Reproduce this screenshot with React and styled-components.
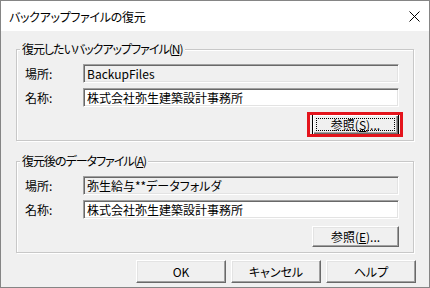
import React from 'react'
import styled, { createGlobalStyle, css } from 'styled-components'

const GlobalStyle = createGlobalStyle`
  body {
    margin: 0;
    padding: 0;
    background: #fff;
  }
`

const Window = styled.div`
  width: 430px;
  height: 288px;
  box-sizing: border-box;
  border: 1px solid #858585;
  background: #f0f0f0;
  font-family: "Noto Sans CJK JP", "Noto Sans", sans-serif;
  font-size: 12px;
  line-height: 16px;
  color: #000;
  font-feature-settings: "palt" 1;
  display: flex;
  flex-direction: column;
  overflow: hidden;
`

const TitleBar = styled.div`
  flex: none;
  height: 30px;
  background: #fff;
  display: flex;
  align-items: center;
  justify-content: space-between;
  padding: 0 9px 0 8px;
`

const Title = styled.div`
  font-size: 12px;
  padding-top: 1px;
  letter-spacing: -0.3px;
`

const Body = styled.div`
  flex: 1;
  padding: 18px 15px 0 15px;
`

const Group = styled.div`
  position: relative;
  border: 1px solid #c8c8c8;
  box-shadow: inset 1px 1px #fff, 1px 1px #fff;
  padding: 14px 14px 5px 8px;
  margin-bottom: ${p => p.$mb || 0}px;
`

const Legend = styled.div`
  position: absolute;
  top: -9px;
  left: 3px;
  padding: 0 2px;
  background: #f0f0f0;
  white-space: nowrap;
  letter-spacing: -1px;
`

const Rows = styled.div`
  display: flex;
  flex-direction: column;
  gap: 5px;
`

const Row = styled.div`
  display: grid;
  grid-template-columns: 58px 1fr;
  align-items: center;
`

const Label = styled.div`
  white-space: nowrap;
`

const Field = styled.div`
  box-sizing: border-box;
  height: 19px;
  padding: 0 0 0 3px;
  background: ${p => (p.$readonly ? '#f0f0f0' : '#fff')};
  border: 1px solid;
  border-color: #a0a0a0 #fff #fff #a0a0a0;
  box-shadow: inset 1px 1px #696969, inset -1px -1px #e3e3e3;
  display: flex;
  align-items: center;
  white-space: nowrap;
  overflow: hidden;
`

const ButtonRow = styled.div`
  display: flex;
  justify-content: flex-end;
  margin-top: 7px;
`

const Btn = styled.button`
  box-sizing: border-box;
  position: relative;
  width: ${p => p.$w}px;
  height: ${p => p.$h}px;
  margin: 0;
  padding: 0;
  font: inherit;
  color: #000;
  background: #f0f0f0;
  border: 1px solid;
  border-color: #fff #696969 #696969 #fff;
  box-shadow: inset -1px -1px #a0a0a0, inset 1px 1px #e3e3e3;
  display: flex;
  align-items: center;
  justify-content: center;
  white-space: nowrap;
  ${p =>
    p.$default &&
    css`
      border-color: #000;
      box-shadow: inset 1px 1px #fff, inset -1px -1px #696969, inset -2px -2px #a0a0a0;
      &::after {
        content: '';
        position: absolute;
        inset: 3px;
        border: 1px dotted #000;
      }
    `}
`

const Marked = styled.div`
  position: relative;
`

const RedBox = styled.span`
  position: absolute;
  top: -2px;
  bottom: -2px;
  left: -5px;
  right: -4px;
  border: 3px solid #e4141c;
  pointer-events: none;
`

const Footer = styled.div`
  display: flex;
  justify-content: flex-end;
  gap: 5px;
  margin: 7px -2px 0 0;
`

const U = styled.span`
  text-decoration: underline;
  text-underline-offset: 1px;
`

const CloseIcon = () => (
  <svg width="11" height="11" viewBox="0 0 11 11">
    <path d="M0.5 0.5 L10.5 10.5 M10.5 0.5 L0.5 10.5" stroke="#000" strokeWidth="1" fill="none" />
  </svg>
)

export default function App() {
  return (
    <>
      <GlobalStyle />
      <Window>
        <TitleBar>
          <Title>バックアップファイルの復元</Title>
          <CloseIcon />
        </TitleBar>
        <Body>
          <Group $mb={20}>
            <Legend>
              復元したいバックアップファイル(<U>N</U>)
            </Legend>
            <Rows>
              <Row>
                <Label>場所:</Label>
                <Field $readonly>BackupFiles</Field>
              </Row>
              <Row>
                <Label>名称:</Label>
                <Field>株式会社弥生建築設計事務所</Field>
              </Row>
            </Rows>
            <ButtonRow>
              <Marked>
                <Btn $w={87} $h={21} $default>
                  参照(<U>S</U>)...
                </Btn>
                <RedBox />
              </Marked>
            </ButtonRow>
          </Group>
          <Group>
            <Legend>
              復元後のデータファイル(<U>A</U>)
            </Legend>
            <Rows>
              <Row>
                <Label>場所:</Label>
                <Field $readonly>弥生給与**データフォルダ</Field>
              </Row>
              <Row>
                <Label>名称:</Label>
                <Field>株式会社弥生建築設計事務所</Field>
              </Row>
            </Rows>
            <ButtonRow>
              <Btn $w={87} $h={21}>
                参照(<U>E</U>)...
              </Btn>
            </ButtonRow>
          </Group>
          <Footer>
            <Btn $w={90} $h={23}>OK</Btn>
            <Btn $w={90} $h={23}>キャンセル</Btn>
            <Btn $w={90} $h={23}>ヘルプ</Btn>
          </Footer>
        </Body>
      </Window>
    </>
  )
}
